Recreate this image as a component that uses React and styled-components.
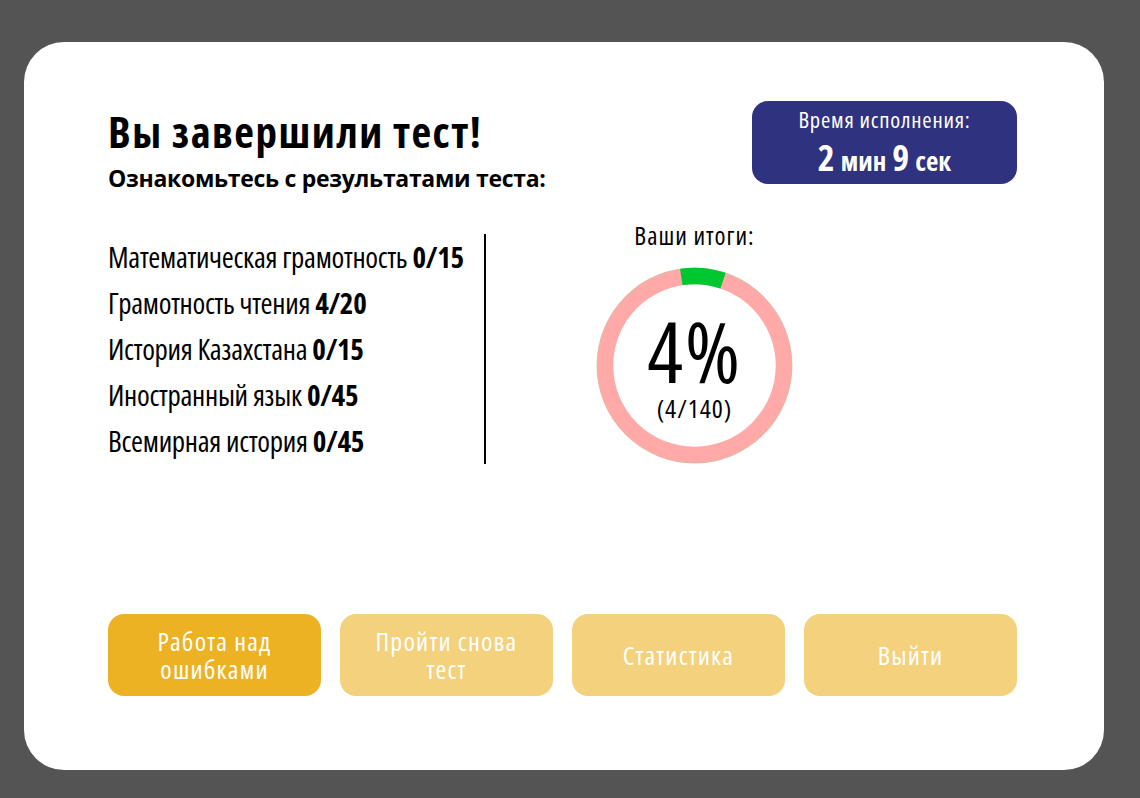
import React from "react";
import styled, { createGlobalStyle } from "styled-components";

const FONT = `"Open Sans", "Roboto Condensed", sans-serif`;

const Global = createGlobalStyle`
  html, body { margin: 0; padding: 0; }
  body {
    background: #545454;
    font-family: ${FONT};
    font-stretch: 75%;
  }
  * { box-sizing: border-box; }
`;

const Page = styled.div`
  width: 1140px;
  height: 798px;
  padding: 42px 36px 28px 24px;
`;

const Card = styled.div`
  height: 728px;
  background: #ffffff;
  border-radius: 40px;
  padding: 59px 87px 74px 84px;
  display: flex;
  flex-direction: column;
`;

const Header = styled.div`
  display: flex;
  justify-content: space-between;
  align-items: flex-start;
`;

const TitleBlock = styled.div`
  padding-top: 6px;
`;

const Title = styled.h1`
  margin: 0;
  font-size: 43px;
  line-height: 50px;
  font-weight: 700;
  letter-spacing: 1.5px;
  color: #000;
`;

const Subtitle = styled.h2`
  margin: 5px 0 0;
  font-size: 23px;
  line-height: 32px;
  font-weight: 700;
  font-stretch: 89%;
  letter-spacing: -0.3px;
  color: #000;
`;

const TimeBadge = styled.div`
  width: 265px;
  height: 83px;
  border-radius: 16px;
  background: #2f327e;
  color: #fff;
  display: flex;
  flex-direction: column;
  align-items: center;
  padding-top: 6px;
`;

const TimeLabel = styled.div`
  font-size: 22.5px;
  line-height: 26px;
  letter-spacing: 0.8px;
`;

const TimeValue = styled.div`
  margin-top: 5px;
  line-height: 40px;
  font-weight: 700;
  display: flex;
  align-items: baseline;
  gap: 6px;
`;

const Num = styled.span`
  font-size: ${(p) => (p.$unit ? "27px" : "36px")};
`;

const Middle = styled.div`
  margin-top: 26px;
  display: flex;
  align-items: flex-start;
`;

const List = styled.ul`
  list-style: none;
  margin: 14px 0 0;
  padding: 0;
  width: 376px;
`;

const Item = styled.li`
  font-size: 29px;
  line-height: 46px;
  letter-spacing: -0.3px;
  color: #000;
  white-space: nowrap;
`;

const Score = styled.b`
  font-weight: 700;
`;

const Divider = styled.div`
  width: 2px;
  height: 230px;
  margin-top: 14px;
  background: #000;
`;

const ChartCol = styled.div`
  margin-left: 110px;
  width: 197px;
  display: flex;
  flex-direction: column;
  align-items: center;
`;

const ChartLabel = styled.div`
  font-size: 25px;
  line-height: 30px;
  letter-spacing: 1px;
  color: #000;
  white-space: nowrap;
`;

const Donut = styled.div`
  margin-top: 17px;
  width: 197px;
  height: 197px;
  display: grid;
  place-items: center;
  & > * { grid-area: 1 / 1; }
`;

const DonutText = styled.div`
  display: flex;
  flex-direction: column;
  align-items: center;
  color: #000;
`;

const Percent = styled.div`
  font-size: 84px;
  line-height: 84px;
  letter-spacing: 2px;
`;

const Fraction = styled.div`
  font-size: 26px;
  line-height: 30px;
  letter-spacing: 1px;
`;

const Buttons = styled.div`
  margin-top: auto;
  display: grid;
  grid-template-columns: repeat(4, 1fr);
  gap: 19px;
`;

const Button = styled.button`
  height: 82px;
  border: none;
  border-radius: 16px;
  background: ${(p) => (p.$active ? "#edb224" : "#f4d17c")};
  color: #fff;
  font-family: inherit;
  font-stretch: 75%;
  font-size: 26px;
  line-height: 28px;
  letter-spacing: 1.2px;
  padding: 0 24px;
  cursor: pointer;
`;

function arcPath(cx, cy, r, a0, a1) {
  const rad = (d) => ((d - 90) * Math.PI) / 180;
  const x0 = cx + r * Math.cos(rad(a0));
  const y0 = cy + r * Math.sin(rad(a0));
  const x1 = cx + r * Math.cos(rad(a1));
  const y1 = cy + r * Math.sin(rad(a1));
  const large = a1 - a0 > 180 ? 1 : 0;
  return `M ${x0} ${y0} A ${r} ${r} 0 ${large} 1 ${x1} ${y1}`;
}

const subjects = [
  ["Математическая грамотность", "0/15"],
  ["Грамотность чтения", "4/20"],
  ["История Казахстана", "0/15"],
  ["Иностранный язык", "0/45"],
  ["Всемирная история", "0/45"],
];

export default function App() {
  return (
    <>
      <Global />
      <Page>
        <Card>
          <Header>
            <TitleBlock>
              <Title>Вы завершили тест!</Title>
              <Subtitle>Ознакомьтесь с результатами теста:</Subtitle>
            </TitleBlock>
            <TimeBadge>
              <TimeLabel>Время исполнения:</TimeLabel>
              <TimeValue>
                <Num>2</Num>
                <Num $unit>мин</Num>
                <Num>9</Num>
                <Num $unit>сек</Num>
              </TimeValue>
            </TimeBadge>
          </Header>
          <Middle>
            <List>
              {subjects.map(([name, score]) => (
                <Item key={name}>
                  {name} <Score>{score}</Score>
                </Item>
              ))}
            </List>
            <Divider />
            <ChartCol>
              <ChartLabel>Ваши итоги:</ChartLabel>
              <Donut>
                <svg width="197" height="197" viewBox="0 0 197 197">
                  <circle cx="98.5" cy="98.5" r="89.5" fill="none" stroke="#ffa9a9" strokeWidth="16.5" />
                  <circle cx="98.5" cy="98.5" r="97.6" fill="none" stroke="#a9cf98" strokeWidth="0.6" opacity="0.7" />
                  <path d={arcPath(98.5, 98.5, 89.5, -8.5, 18.6)} fill="none" stroke="#00c730" strokeWidth="16.5" />
                </svg>
                <DonutText>
                  <Percent>4%</Percent>
                  <Fraction>(4/140)</Fraction>
                </DonutText>
              </Donut>
            </ChartCol>
          </Middle>
          <Buttons>
            <Button $active>Работа над ошибками</Button>
            <Button>Пройти снова тест</Button>
            <Button>Статистика</Button>
            <Button>Выйти</Button>
          </Buttons>
        </Card>
      </Page>
    </>
  );
}
